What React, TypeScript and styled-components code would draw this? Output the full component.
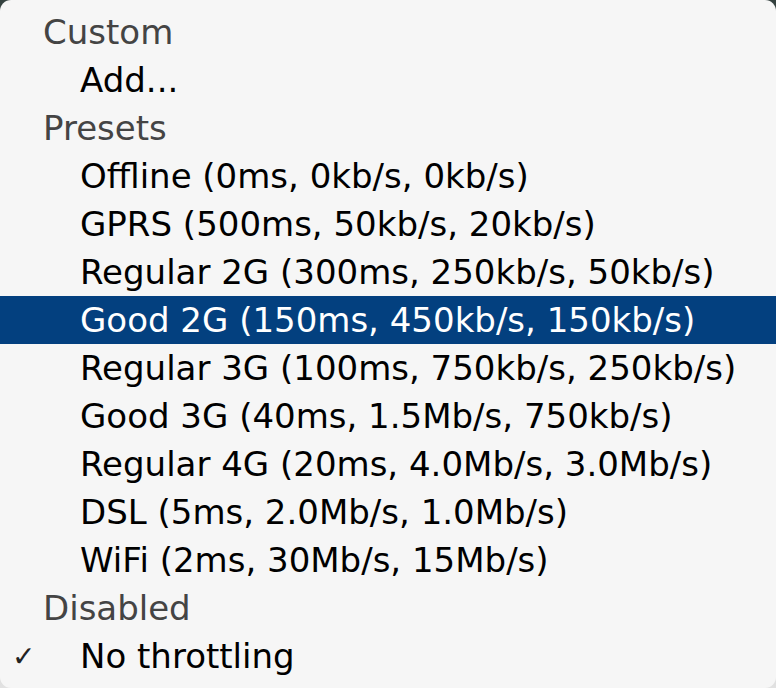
import React from "react";
import styled, { createGlobalStyle } from "styled-components";

const Global = createGlobalStyle`
  html, body { margin: 0; padding: 0; }
  body {
    width: 776px;
    height: 688px;
    overflow: hidden;
    background: linear-gradient(#34413f 0%, #6a7070 50%, #e2e2e2 100%);
  }
`;

const Menu = styled.div`
  box-sizing: border-box;
  width: 776px;
  height: 688px;
  padding: 8px 0;
  background: #f6f6f6;
  border-radius: 11px;
  font-family: "DejaVu Sans", "Open Sans", sans-serif;
  font-size: 34px;
  display: flex;
  flex-direction: column;
`;

const Header = styled.div`
  height: 48px;
  display: flex;
  align-items: center;
  padding-left: 43px;
  color: #444444;
`;

const Item = styled.div<{ $selected?: boolean }>`
  height: 48px;
  display: flex;
  align-items: center;
  position: relative;
  padding-left: 80px;
  color: ${(p) => (p.$selected ? "#ffffff" : "#000000")};
  background: ${(p) => (p.$selected ? "#03407f" : "transparent")};
`;

const Check = styled.span`
  position: absolute;
  left: 12px;
  font-size: 28px;
  color: #222;
`;

type Row = { kind: "h" | "i"; text: string; selected?: boolean; checked?: boolean };

const rows: Row[] = [
  { kind: "h", text: "Custom" },
  { kind: "i", text: "Add..." },
  { kind: "h", text: "Presets" },
  { kind: "i", text: "Offline (0ms, 0kb/s, 0kb/s)" },
  { kind: "i", text: "GPRS (500ms, 50kb/s, 20kb/s)" },
  { kind: "i", text: "Regular 2G (300ms, 250kb/s, 50kb/s)" },
  { kind: "i", text: "Good 2G (150ms, 450kb/s, 150kb/s)", selected: true },
  { kind: "i", text: "Regular 3G (100ms, 750kb/s, 250kb/s)" },
  { kind: "i", text: "Good 3G (40ms, 1.5Mb/s, 750kb/s)" },
  { kind: "i", text: "Regular 4G (20ms, 4.0Mb/s, 3.0Mb/s)" },
  { kind: "i", text: "DSL (5ms, 2.0Mb/s, 1.0Mb/s)" },
  { kind: "i", text: "WiFi (2ms, 30Mb/s, 15Mb/s)" },
  { kind: "h", text: "Disabled" },
  { kind: "i", text: "No throttling", checked: true },
];

export default function App() {
  return (
    <>
      <Global />
      <Menu>
        {rows.map((r, i) =>
          r.kind === "h" ? (
            <Header key={i}>{r.text}</Header>
          ) : (
            <Item key={i} $selected={r.selected}>
              {r.checked && <Check>✓</Check>}
              {r.text}
            </Item>
          )
        )}
      </Menu>
    </>
  );
}
